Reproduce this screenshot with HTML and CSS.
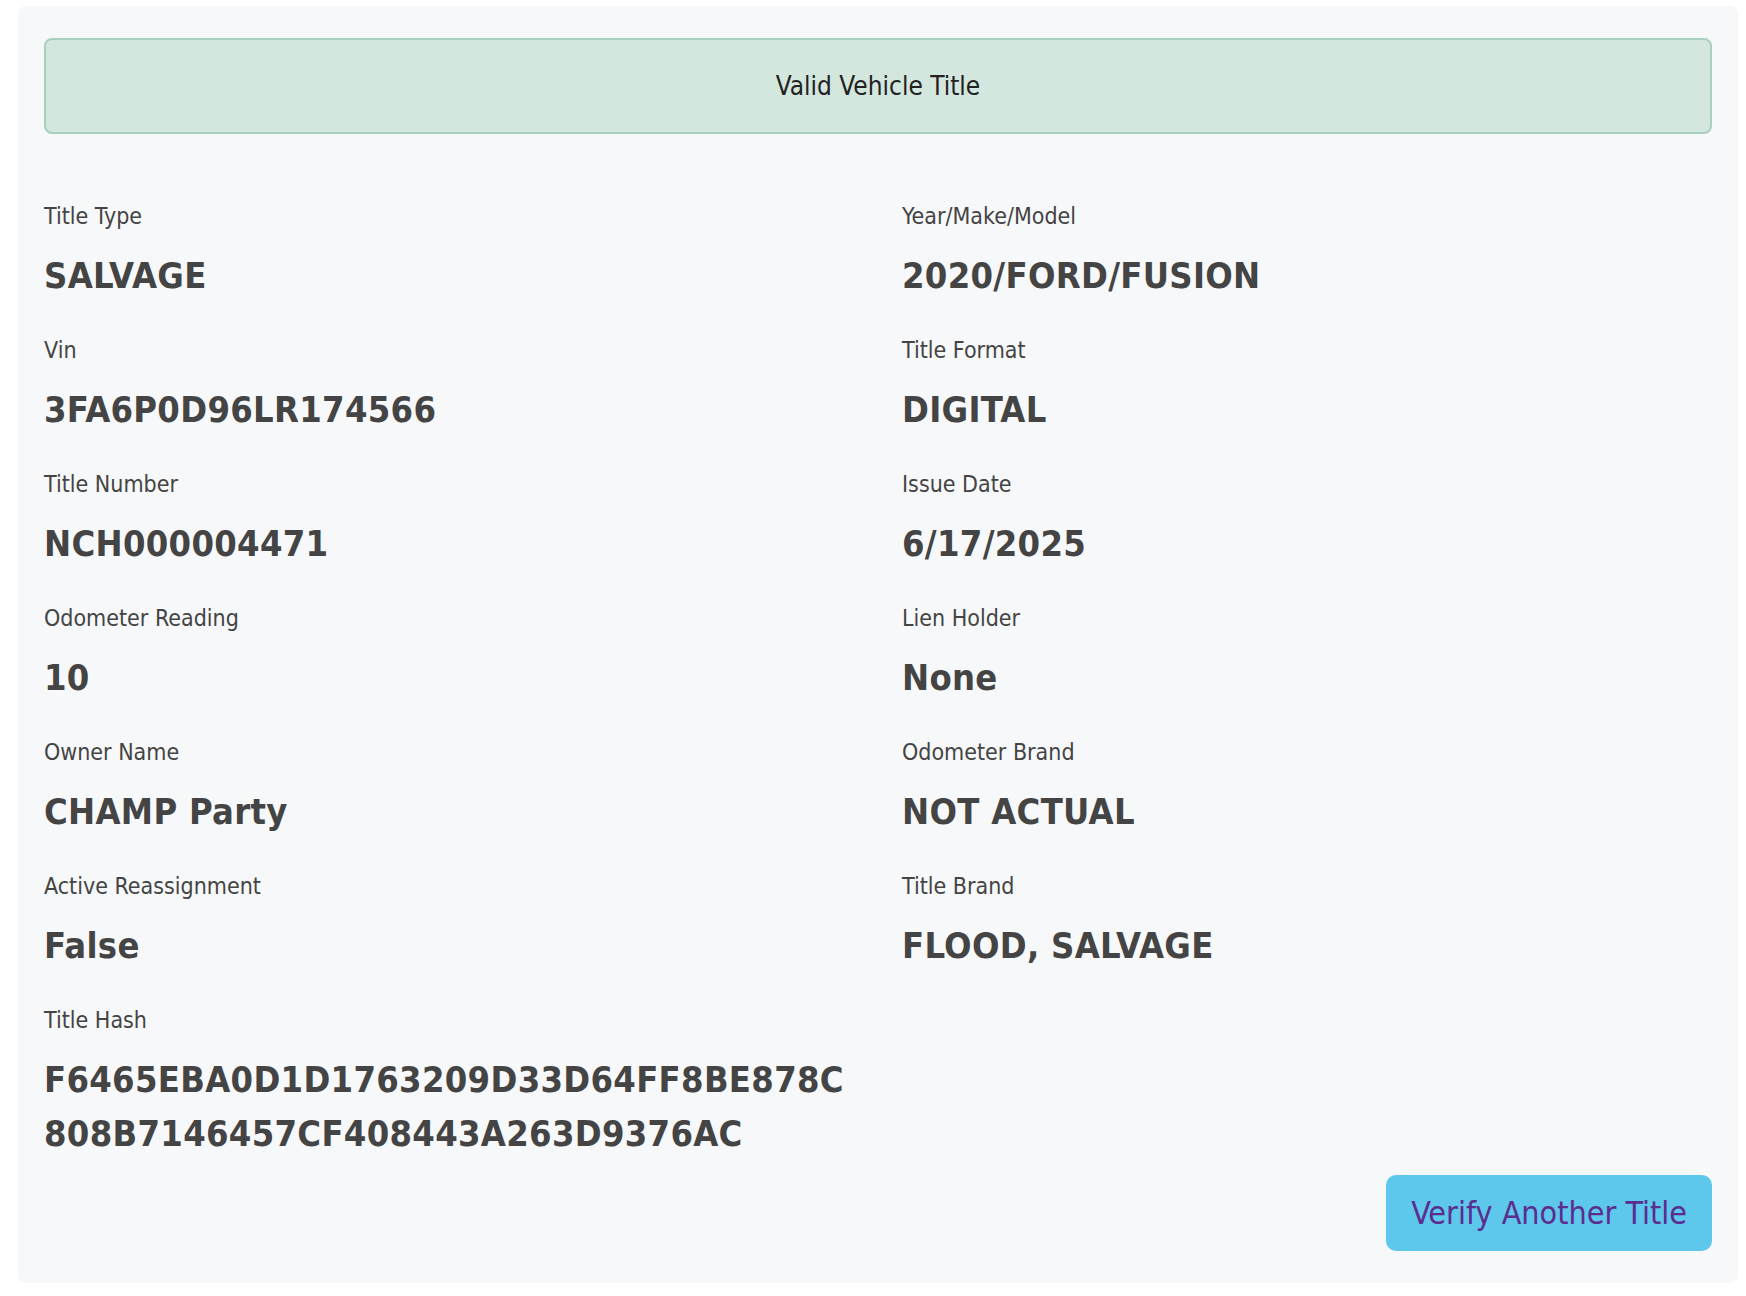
FILE: index.html
```html
<!DOCTYPE html>
<html lang="en">
<head>
    <meta charset="UTF-8">
    <meta name="viewport" content="width=device-width, initial-scale=1.0">
    <title>Title Verification</title>
    <link rel="stylesheet" href="styles.css">
</head>
<body>
    <div class="result-card">
        <div class="status-banner">Valid Vehicle Title</div>

        <div class="fields">
            <div class="field">
                <div class="field-label">Title Type</div>
                <div class="field-value">SALVAGE</div>
            </div>
            <div class="field">
                <div class="field-label">Year/Make/Model</div>
                <div class="field-value">2020/FORD/FUSION</div>
            </div>

            <div class="field">
                <div class="field-label">Vin</div>
                <div class="field-value">3FA6P0D96LR174566</div>
            </div>
            <div class="field">
                <div class="field-label">Title Format</div>
                <div class="field-value">DIGITAL</div>
            </div>

            <div class="field">
                <div class="field-label">Title Number</div>
                <div class="field-value">NCH000004471</div>
            </div>
            <div class="field">
                <div class="field-label">Issue Date</div>
                <div class="field-value">6/17/2025</div>
            </div>

            <div class="field">
                <div class="field-label">Odometer Reading</div>
                <div class="field-value">10</div>
            </div>
            <div class="field">
                <div class="field-label">Lien Holder</div>
                <div class="field-value">None</div>
            </div>

            <div class="field">
                <div class="field-label">Owner Name</div>
                <div class="field-value">CHAMP Party</div>
            </div>
            <div class="field">
                <div class="field-label">Odometer Brand</div>
                <div class="field-value">NOT ACTUAL</div>
            </div>

            <div class="field">
                <div class="field-label">Active Reassignment</div>
                <div class="field-value">False</div>
            </div>
            <div class="field">
                <div class="field-label">Title Brand</div>
                <div class="field-value">FLOOD, SALVAGE</div>
            </div>

            <div class="field">
                <div class="field-label">Title Hash</div>
                <div class="field-value hash">F6465EBA0D1D1763209D33D64FF8BE878C<wbr>808B7146457CF408443A263D9376AC</div>
            </div>
        </div>

        <div class="actions">
            <button type="button" class="verify-btn">Verify Another Title</button>
        </div>
    </div>
</body>
</html>
```

FILE: styles.css
```css
body {
    margin: 6px 8px 12px 18px;
    background-color: #fff;
    font-family: "DejaVu Sans Condensed", "DejaVu Sans", sans-serif;
    font-stretch: condensed;
    color: #444;
}

.result-card {
    background-color: #f7f8fa;
    border-radius: 8px;
    padding: 32px 26px;
}

.status-banner {
    display: flex;
    align-items: center;
    justify-content: center;
    height: 96px;
    box-sizing: border-box;
    background-color: #d4e7de;
    border: 2px solid #a9d0be;
    border-radius: 8px;
    color: #222;
    font-size: 26px;
    margin-bottom: 65px;
}

.fields {
    display: grid;
    grid-template-columns: minmax(0, 1fr) minmax(0, 1fr);
    column-gap: 48px;
    row-gap: 30px;
}

.field-label {
    font-size: 23px;
    line-height: 34px;
    margin-bottom: 16px;
}

.field-value {
    font-size: 36px;
    line-height: 54px;
    font-weight: bold;
    letter-spacing: 0.3px;
}

.hash {
    overflow-wrap: normal;
}

.actions {
    display: flex;
    justify-content: flex-end;
    margin-top: 14px;
}

.verify-btn {
    font-family: inherit;
    font-stretch: condensed;
    font-size: 32px;
    line-height: 46px;
    padding: 15px 25px;
    background-color: #5ec8ec;
    color: #5b2d8f;
    border: none;
    border-radius: 10px;
    cursor: pointer;
}
```
